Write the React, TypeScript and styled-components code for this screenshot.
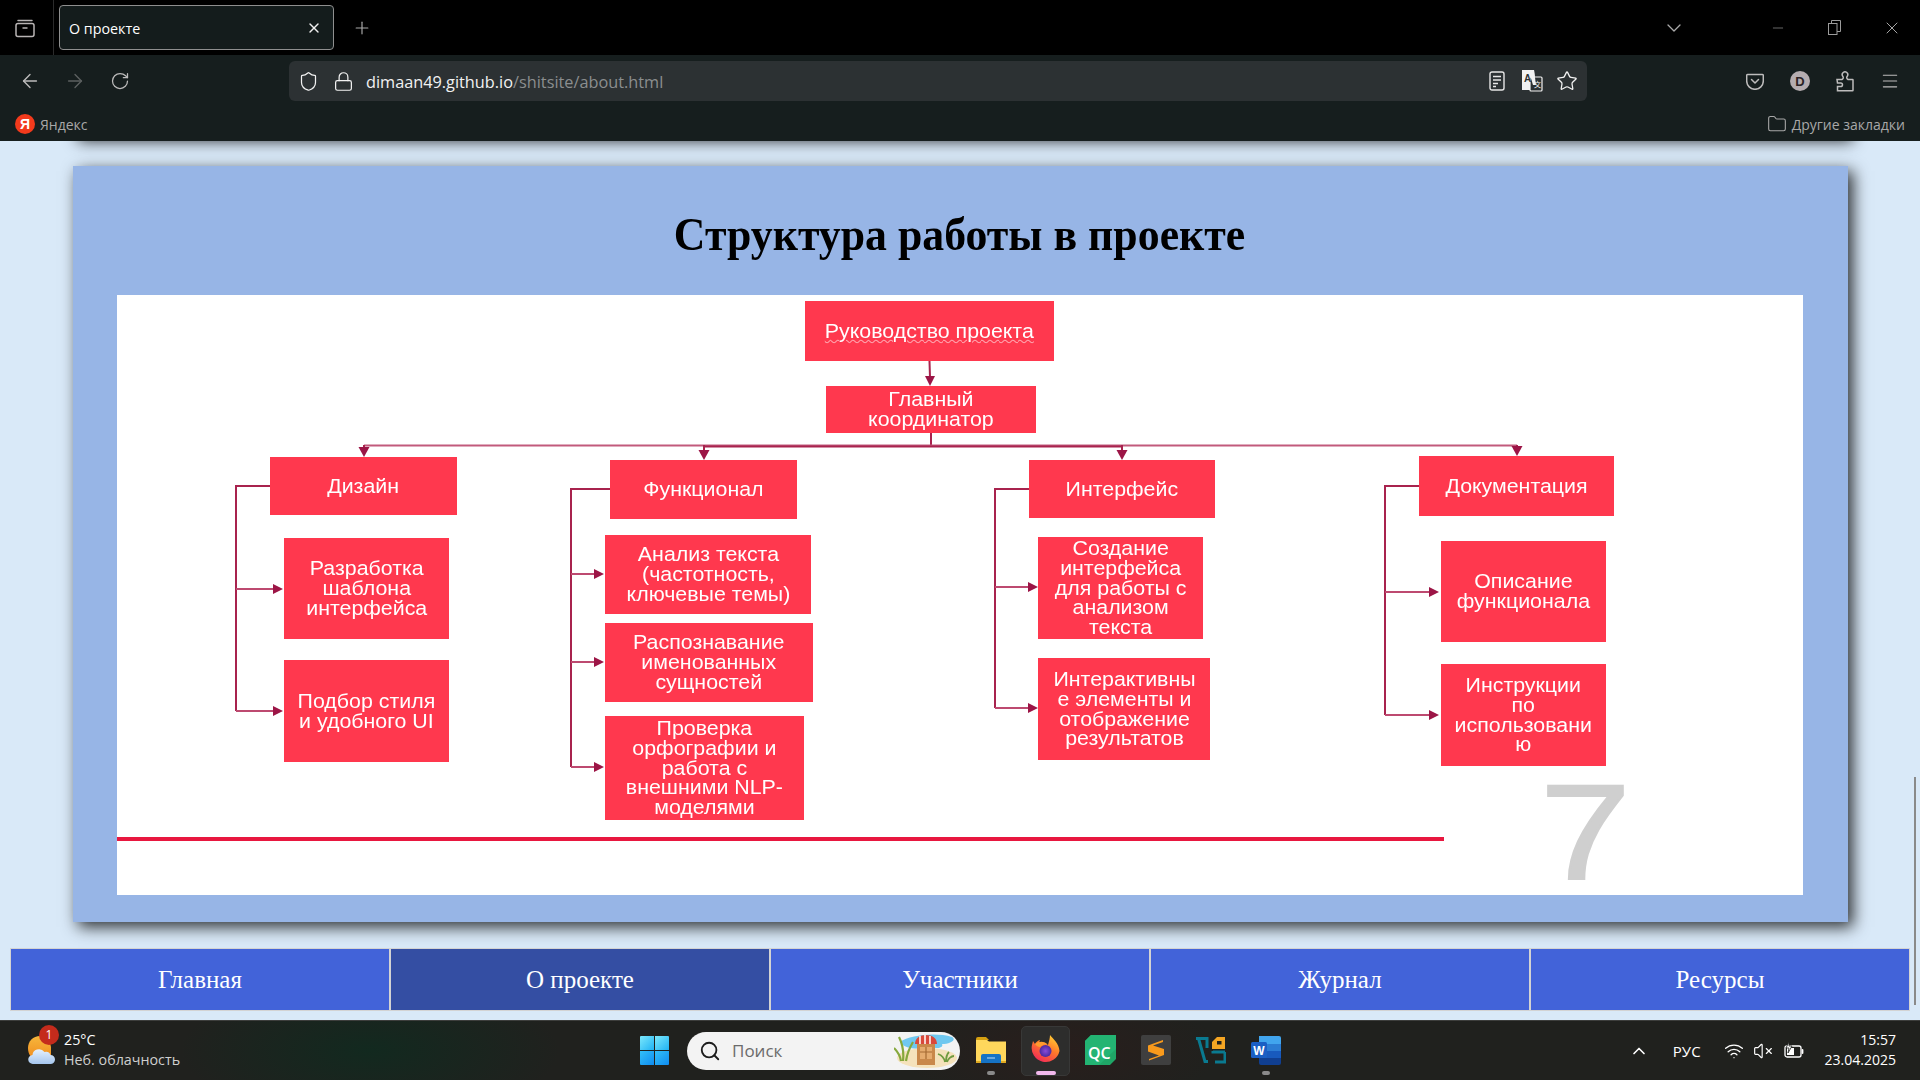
import styled, { createGlobalStyle } from "styled-components";
import {
  ArrowLeft,
  ArrowRight,
  ChevronDown,
  ChevronUp,
  Folder,
  Lock,
  Menu,
  Minus,
  Plus,
  RotateCw,
  Search,
  Shield,
  Star,
  VolumeX,
  Wifi,
  X,
} from "lucide-react";

const GlobalStyle = createGlobalStyle`
  html, body {
    margin: 0;
    padding: 0;
    width: 1920px;
    height: 1080px;
    overflow: hidden;
    background: #d9e9f8;
  }

  * {
    box-sizing: border-box;
  }
`;

const Screen = styled.div`
  width: 1920px;
  height: 1080px;
  display: flex;
  flex-direction: column;
  font-family: "Open Sans", "Liberation Sans", sans-serif;
`;

/* ---------- browser chrome ---------- */

const TabStrip = styled.div`
  height: 55px;
  background: #000;
  display: flex;
  align-items: flex-start;
  color: #c8c6c6;
`;

const TabListSlot = styled.div`
  width: 54px;
  height: 55px;
  border-right: 1px solid #2b2b2b;
  display: flex;
  align-items: center;
  justify-content: center;
  padding-right: 4px;
`;

const Tab = styled.div`
  width: 275px;
  height: 45px;
  margin: 5px 0 0 5px;
  padding: 1px 11px 0 9px;
  display: flex;
  align-items: center;
  justify-content: space-between;
  background: #141c1c;
  border: 1px solid #8f8f8f;
  border-radius: 4px;
  color: #fff;
  font-size: 14.3px;
`;

const NewTab = styled.div`
  width: 56px;
  height: 55px;
  display: flex;
  align-items: center;
  justify-content: center;
`;

const StripRight = styled.div`
  margin-left: auto;
  display: flex;
  align-items: center;
  height: 55px;
`;

const TabsMenu = styled.div`
  width: 60px;
  display: flex;
  justify-content: center;
  margin-right: 45px;
`;

const WindowButton = styled.div`
  width: 57px;
  display: flex;
  justify-content: center;
  align-items: center;
`;

const Toolbar = styled.div`
  height: 52px;
  background: #161e1e;
  display: flex;
  align-items: center;
  padding: 0 8px 0 7px;
`;

const ToolButton = styled.div<{ $dim?: boolean }>`
  width: 45px;
  height: 40px;
  display: flex;
  align-items: center;
  justify-content: center;
  color: ${(p) => (p.$dim ? "#5c6060" : "#bdbcbc")};
`;

const UrlBar = styled.div`
  width: 1298px;
  height: 40px;
  margin-left: 147px;
  padding-left: 1px;
  padding-right: 3px;
  background: #2c3133;
  border-radius: 6px;
  display: flex;
  align-items: center;
  color: #f2f2f2;
`;

const UrlIcon = styled.div<{ $w: number }>`
  width: ${(p) => p.$w}px;
  height: 40px;
  display: flex;
  align-items: center;
  justify-content: center;
  flex: none;
`;

const UrlText = styled.div`
  margin-left: 5px;
  padding-top: 2px;
  font-size: 16.3px;
  flex: 1;
  color: #8b8e8f;
  white-space: nowrap;

  b {
    font-weight: 400;
    color: #f2f2f2;
  }
`;

const ToolRight = styled.div`
  margin-left: auto;
  display: flex;
`;

const Bookmarks = styled.div`
  height: 34px;
  background: #161e1e;
  display: flex;
  align-items: center;
  justify-content: space-between;
  padding: 0 15px;
  font-size: 14px;
  color: #a8a8a8;
`;

const Bookmark = styled.div`
  display: flex;
  align-items: center;
  gap: 5px;
`;

const YandexLogo = styled.span`
  width: 20px;
  height: 20px;
  border-radius: 50%;
  background: #f33a1c;
  color: #fff;
  font-family: "Liberation Sans", sans-serif;
  font-weight: 700;
  font-size: 14px;
  display: flex;
  align-items: center;
  justify-content: center;
`;

/* ---------- page ---------- */

const Page = styled.main`
  position: relative;
  height: 879px;
  overflow: hidden;
  background: #d9e9f8;
  display: flex;
  flex-direction: column;
`;

const PreviousCard = styled.div`
  height: 20px;
  margin: -25px 72px 30px 73px;
  background: #97b5e6;
  box-shadow: 5px 5px 15px rgba(0, 0, 0, 0.8);
  flex: none;
`;

const Card = styled.section`
  margin: 0 72px 0 73px;
  height: 756px;
  padding: 0 45px 27px 44px;
  background: #97b5e6;
  box-shadow: 5px 5px 15px rgba(0, 0, 0, 0.8);
  display: flex;
  flex-direction: column;
  flex: none;
`;

const Title = styled.h2`
  height: 129px;
  margin: 0;
  padding-top: 6px;
  display: flex;
  align-items: center;
  justify-content: center;
  font-family: "Liberation Serif", serif;
  font-size: 47px;
  font-weight: 700;
  color: #000;

  span {
    display: inline-block;
    transform: scaleX(0.932);
  }
`;

const Diagram = styled.div`
  position: relative;
  flex: 1;
  background: #fff;
`;

const Wires = styled.svg`
  position: absolute;
  inset: 0;
  width: 100%;
  height: 100%;
  filter: blur(0.3px);
`;

const Node = styled.div<{ $x: number; $y: number; $w: number; $h: number; $wavy?: boolean }>`
  position: absolute;
  left: ${(p) => p.$x - 117}px;
  top: ${(p) => p.$y - 295}px;
  width: ${(p) => p.$w}px;
  height: ${(p) => p.$h}px;
  padding-top: 1px;
  display: flex;
  align-items: center;
  justify-content: center;
  text-align: center;
  white-space: pre;
  background: #ff384e;
  color: #fff;
  font-family: "Liberation Sans", sans-serif;
  font-size: 19.7px;
  line-height: 19.8px;
  filter: blur(0.35px);

  span {
    display: inline-block;
    transform: scaleX(1.085);
    text-decoration: ${(p) => (p.$wavy ? "underline wavy rgba(255,255,255,0.55) 1px" : "none")};
  }
`;

const RedRule = styled.div`
  position: absolute;
  left: 0;
  top: 542px;
  width: 1327px;
  height: 4px;
  background: #e8173f;
`;

const SlideNumber = styled.div`
  position: absolute;
  left: 1423px;
  top: 483px;
  font-family: "Liberation Sans", sans-serif;
  font-size: 136px;
  line-height: 109px;
  color: #cfcfcf;
  -webkit-text-stroke: 2px #cfcfcf;
  transform: scaleX(1.2);
  transform-origin: left center;
`;

const Nav = styled.nav`
  margin: 26px 10px 0 10px;
  height: 63px;
  display: grid;
  grid-template-columns: repeat(5, 1fr);
  flex: none;
`;

const NavItem = styled.a<{ $active?: boolean }>`
  display: flex;
  align-items: center;
  justify-content: center;
  background: ${(p) => (p.$active ? "#344ea3" : "#4263d9")};
  border: 1px solid #d3d3d3;
  color: #fff;
  font-family: "Liberation Serif", serif;
  font-size: 25px;
`;

const ScrollThumb = styled.div`
  position: absolute;
  right: 4px;
  top: 636px;
  width: 2px;
  height: 228px;
  background: #8a8a8a;
`;

/* ---------- taskbar ---------- */

const Taskbar = styled.footer`
  height: 60px;
  border-top: 1px solid #3d3e3c;
  background:
    radial-gradient(ellipse 190px 70px at 370px 50%, #12291f 0%, transparent 100%),
    radial-gradient(ellipse 160px 60px at 1060px 50%, #291e1c 0%, transparent 100%),
    #20211e;
  display: flex;
  align-items: center;
  color: #fff;
`;

const Weather = styled.div`
  width: 640px;
  padding: 0 0 2px 28px;
  display: flex;
  align-items: center;
  gap: 9px;
`;

const WeatherIcon = styled.div`
  position: relative;
  width: 27px;
  height: 30px;
  flex: none;
`;

const Badge = styled.span`
  position: absolute;
  left: 11px;
  top: -10px;
  width: 20px;
  height: 20px;
  border-radius: 50%;
  background: #c42b1c;
  color: #fff;
  font-size: 12px;
  display: flex;
  align-items: center;
  justify-content: center;
`;

const WeatherText = styled.div`
  font-size: 14.3px;
  line-height: 20px;

  span {
    display: block;
    color: #cfcfcf;
  }
`;

const StartLogo = styled.div`
  width: 29px;
  height: 29px;
  margin-right: 18px;
  flex: none;
`;

const SearchBox = styled.div`
  width: 273px;
  height: 38px;
  margin-right: 3px;
  padding: 0 2px 0 12px;
  border-radius: 19px;
  background: #f3f3f3;
  color: #6b6b6b;
  font-size: 17px;
  display: flex;
  align-items: center;
  gap: 11px;
  flex: none;

  svg:last-child {
    margin-left: auto;
  }
`;

const AppSlot = styled.div<{ $active?: boolean }>`
  position: relative;
  width: 55px;
  height: 50px;
  padding-bottom: 1px;
  display: flex;
  align-items: center;
  justify-content: center;
  flex: none;

  ${(p) =>
    p.$active &&
    `
    &::before {
      content: "";
      position: absolute;
      inset: 0 3px;
      background: #2d2d2c;
      border: 1px solid #383837;
      border-radius: 5px;
    }
  `}

  svg {
    position: relative;
  }
`;

const RunDot = styled.span<{ $active?: boolean }>`
  position: absolute;
  bottom: 1px;
  left: 50%;
  transform: translateX(-50%);
  width: ${(p) => (p.$active ? 20 : 8)}px;
  height: 4px;
  border-radius: 2px;
  background: ${(p) => (p.$active ? "#f2b8ec" : "#8a8a8a")};
`;

const Tray = styled.div`
  margin-left: auto;
  padding-right: 24px;
  display: flex;
  align-items: center;
  font-size: 15px;
`;

const TrayItem = styled.div<{ $gap: number }>`
  margin-left: ${(p) => p.$gap}px;
  display: flex;
  align-items: center;
  justify-content: center;
`;

const Clock = styled.div`
  margin-left: 21px;
  padding-bottom: 2px;
  text-align: right;
  line-height: 20px;
  font-size: 14px;
`;

/* ---------- data ---------- */

type Box = { x: number; y: number; r: number; b: number; text: string; wavy?: boolean };

const boxes: Box[] = [
  { x: 805, y: 301, r: 1054, b: 361, text: "Руководство проекта", wavy: true },
  { x: 826, y: 386, r: 1036, b: 433, text: "Главный\nкоординатор" },
  { x: 270, y: 457, r: 457, b: 515, text: "Дизайн" },
  { x: 610, y: 460, r: 797, b: 519, text: "Функционал" },
  { x: 1029, y: 460, r: 1215, b: 518, text: "Интерфейс" },
  { x: 1419, y: 456, r: 1614, b: 516, text: "Документация" },
  { x: 284, y: 538, r: 449, b: 639, text: "Разработка\nшаблона\nинтерфейса" },
  { x: 284, y: 660, r: 449, b: 762, text: "Подбор стиля\nи удобного UI" },
  { x: 605, y: 535, r: 811, b: 614, text: "Анализ текста\n(частотность,\nключевые темы)" },
  { x: 605, y: 623, r: 813, b: 702, text: "Распознавание\nименованных\nсущностей" },
  { x: 605, y: 716, r: 804, b: 820, text: "Проверка\nорфографии и\nработа с\nвнешними NLP-\nмоделями" },
  { x: 1038, y: 537, r: 1203, b: 639, text: "Создание\nинтерфейса\nдля работы с\nанализом\nтекста" },
  { x: 1038, y: 658, r: 1210, b: 760, text: "Интерактивны\nе элементы и\nотображение\nрезультатов" },
  { x: 1441, y: 541, r: 1606, b: 642, text: "Описание\nфункционала" },
  { x: 1441, y: 664, r: 1606, b: 766, text: "Инструкции\nпо\nиспользовани\nю" },
];

const drops = [
  { x: 364, to: 457 },
  { x: 704, to: 460 },
  { x: 1122, to: 460 },
  { x: 1517, to: 456 },
];

const brackets = [
  { x: 236, from: 270, top: 486, arrows: [589, 711], to: 283 },
  { x: 571, from: 610, top: 489, arrows: [574, 662, 767], to: 604 },
  { x: 995, from: 1029, top: 489, arrows: [587, 708], to: 1038 },
  { x: 1385, from: 1419, top: 486, arrows: [592, 715], to: 1439 },
];

const navItems = ["Главная", "О проекте", "Участники", "Журнал", "Ресурсы"];

const WIRE = "#a8234e";

/* ---------- drawings ---------- */

function DiagramWires() {
  return (
    <Wires viewBox="117 295 1686 600">
      <g stroke={WIRE} strokeWidth="2" fill="none">
        <path d="M929.5 361 L930 378" />
        <path d="M931 433 V446" />
        <path d="M364 445.5 H1517" stroke="#c25a7c" />
        <path d="M704 446.5 H1122" />
        {drops.map((d) => (
          <path key={d.x} d={`M${d.x} 445 V${d.to - 8}`} />
        ))}
        {brackets.map((b) => (
          <g key={b.x}>
            <path d={`M${b.from} ${b.top} H${b.x} V${b.arrows[b.arrows.length - 1]}`} />
            {b.arrows.map((y) => (
              <path key={y} d={`M${b.x} ${y} H${b.to - 8}`} stroke="#bd4a70" />
            ))}
          </g>
        ))}
      </g>
      <g fill="#9c1546">
        <path d="M925 376 h10 l-5 10 z" />
        {drops.map((d) => (
          <path key={d.x} d={`M${d.x - 5.5} ${d.to - 10} h11 l-5.5 10 z`} />
        ))}
        {brackets.map((b) =>
          b.arrows.map((y) => <path key={y} d={`M${b.to - 10} ${y - 5} l10 5 l-10 5 z`} />)
        )}
      </g>
    </Wires>
  );
}

function TabListIcon() {
  return (
    <svg width="20" height="20" viewBox="0 0 20 20" fill="none" stroke="#b8b4b4" strokeWidth="1.5">
      <path d="M3 2.5h14" strokeLinecap="round" />
      <rect x="1" y="5.5" width="18" height="13" rx="2" />
      <path d="M7.5 10h5" />
    </svg>
  );
}

function RestoreIcon() {
  return (
    <svg width="13" height="15" viewBox="0 0 13 15" fill="none" stroke="#9c9c9c" strokeWidth="1">
      <rect x="0.5" y="3.5" width="8.5" height="11" />
      <path d="M3.5 3.5V0.5H12.5V11.5H9" />
    </svg>
  );
}

function ReaderIcon() {
  return (
    <svg width="16" height="20" viewBox="0 0 16 20" fill="none" stroke="#e6e6e6" strokeWidth="1.4">
      <rect x="1" y="1" width="14" height="18" rx="2" />
      <path d="M4 5.5h8M4 9h8M4 12.5h5M4 15.5h3" />
    </svg>
  );
}

function TranslateIcon() {
  return (
    <svg width="22" height="22" viewBox="0 0 22 22">
      <path d="M1 0h12l2 20H1z" fill="#f2f2f2" />
      <rect x="9" y="7" width="12" height="14" rx="1" fill="#2c3133" stroke="#f2f2f2" strokeWidth="1.2" />
      <path d="M7.5 0h5.5l2 15-3 0z" fill="#f2f2f2" />
      <text x="3" y="11.5" fontSize="10" fontWeight="700" fontFamily="Liberation Sans" fill="#2c3133">
        A
      </text>
      <text x="13" y="17" fontSize="7" fontFamily="Noto Sans CJK SC" fill="#f2f2f2">
        文
      </text>
    </svg>
  );
}

function PocketIcon() {
  return (
    <svg width="18" height="18" viewBox="0 0 18 18" fill="none" stroke="#bdbcbc" strokeWidth="1.5">
      <path d="M1.5 2.5h15a.8.8 0 0 1 .8.8V9a8.3 8.3 0 0 1-16.6 0V3.3a.8.8 0 0 1 .8-.8z" />
      <path d="M5.5 7.5 9 11l3.5-3.5" strokeLinecap="round" strokeLinejoin="round" />
    </svg>
  );
}

function AccountIcon() {
  return (
    <svg width="20" height="20" viewBox="0 0 20 20">
      <circle cx="10" cy="10" r="10" fill="#b5adb0" />
      <text x="10" y="14.5" textAnchor="middle" fontSize="13" fontWeight="700" fontFamily="Liberation Sans" fill="#2b2325">
        D
      </text>
    </svg>
  );
}

function PuzzleIcon() {
  return (
    <svg width="18" height="22" viewBox="0 0 18 22" fill="none" stroke="#bdbcbc" strokeWidth="1.5">
      <path d="M1 9.5h5a2 2 0 0 0 .6-3.4 2.8 2.8 0 1 1 4.8 0A2 2 0 0 0 12 9.5h4.5a.5.5 0 0 1 .5.5v10.2a.5.5 0 0 1-.5.5H1.5v-4.2h3.2a1.8 1.8 0 0 0 0-3.6H1.5z" />
    </svg>
  );
}

function WindowsLogo() {
  return (
    <StartLogo>
      <svg width="29" height="29" viewBox="0 0 29 29">
        <defs>
          <linearGradient id="winA" x1="0" y1="0" x2="1" y2="1">
            <stop offset="0" stopColor="#7ce8fb" />
            <stop offset="1" stopColor="#1fb2f4" />
          </linearGradient>
          <linearGradient id="winB" x1="0" y1="0" x2="1" y2="1">
            <stop offset="0" stopColor="#33c0f8" />
            <stop offset="1" stopColor="#0f8cf0" />
          </linearGradient>
        </defs>
        <path d="M1 0h13v14H0V1a1 1 0 0 1 1-1z" fill="url(#winA)" />
        <path d="M15 0h13a1 1 0 0 1 1 1v13H15z" fill="url(#winA)" />
        <path d="M0 15h14v14H1a1 1 0 0 1-1-1z" fill="url(#winB)" />
        <path d="M15 15h14v13a1 1 0 0 1-1 1H15z" fill="url(#winB)" />
      </svg>
    </StartLogo>
  );
}

function BeachPicture() {
  return (
    <svg width="64" height="36" viewBox="0 0 64 36">
      <ellipse cx="33" cy="25" rx="30" ry="10" fill="#f5e2bb" />
      <path d="M6 9C16 2 42-1 58 4c5 3-2 7-10 7 2 4-6 5-12 3C24 17 10 16 6 9z" fill="#6fc8f0" />
      <path d="M9 28C10 19 9 12 5 4M12 28c1-7 4-14 7-19M7 28C6 22 3 18 0 15" stroke="#86a83c" strokeWidth="2.2" fill="none" />
      <rect x="23" y="10" width="18" height="22" fill="#c9884a" />
      <path d="M21 11c0-6 5-9 11-9s11 3 11 9z" fill="#d9483b" />
      <path d="M26 3v8M31 2v9M36 3v8" stroke="#fff" strokeWidth="1.500" />
      <path d="M26 14h12v12H26z" fill="#e5ab6e" />
      <path d="M26 19h12M32 14v12" stroke="#a66b33" strokeWidth="1.200" />
      <path d="M51 29c-1-5-4-7-7-8M52 29c0-5 1-8 3-10M53 29c1-3 4-6 7-6" stroke="#6f9a3f" strokeWidth="1.800" fill="none" />
    </svg>
  );
}

function ExplorerIcon() {
  return (
    <svg width="30" height="26" viewBox="0 0 30 26">
      <path d="M0 2a2 2 0 0 1 2-2h8l3 3h-13z" fill="#d6a011" />
      <path d="M0 3h11l2 1.500h17V25a1 1 0 0 1-1 1H1a1 1 0 0 1-1-1z" fill="#ffd75c" />
      <path d="M0 24h30v2H0z" fill="#e0a920" />
      <path d="M5 19a2 2 0 0 1 2-2h16a2 2 0 0 1 2 2v7H5z" fill="#1673c5" />
      <path d="M11 21h8" stroke="#bfe0f8" strokeWidth="1" />
    </svg>
  );
}

function FirefoxIcon() {
  return (
    <svg width="29" height="30" viewBox="0 0 29 30">
      <defs>
        <linearGradient id="foxA" x1="0.8" y1="0" x2="0.2" y2="1">
          <stop offset="0" stopColor="#ffd234" />
          <stop offset="0.45" stopColor="#ff7a2a" />
          <stop offset="1" stopColor="#f1235c" />
        </linearGradient>
        <radialGradient id="foxB">
          <stop offset="0" stopColor="#8a4bd8" />
          <stop offset="1" stopColor="#4a2aa0" />
        </radialGradient>
      </defs>
      <path d="M19 0c3 4 9 8 9.500 16A14 14 0 1 1 1 10l1-4 2 3c1-2 3-3.500 5-4l-1 3c4-1 7 0 9 2 1-4 2-7 2-10z" fill="url(#foxA)" />
      <circle cx="14.500" cy="16" r="6" fill="url(#foxB)" />
      <path d="M4 9c4-3 9-3 12 0 -3 0-5 1-7 3-2 0-3.500-1-5-3z" fill="#ff9b2e" />
    </svg>
  );
}

function QtIcon() {
  return (
    <svg width="31" height="30" viewBox="0 0 31 30">
      <path d="M6 0h25v24l-6 6H0V6z" fill="#1fa667" />
      <path d="M0 6 6 0h25v14L14 30H0z" fill="#23b473" />
      <text x="3" y="24" fontSize="16" fontWeight="600" fontFamily="Open Sans" fill="#fff">
        QC
      </text>
    </svg>
  );
}

function SublimeIcon() {
  return (
    <svg width="30" height="30" viewBox="0 0 30 30">
      <rect width="30" height="30" rx="2" fill="#3f3f3f" />
      <path d="M22 5 7 10.500v6l11 4-10 3.500v1.500l15-5.500v-6l-11-3.500 10-3.500z" fill="#f89a1c" />
    </svg>
  );
}

function VsIcon() {
  return (
    <svg width="30" height="28" viewBox="0 0 30 28">
      <path d="M0 2.500H11V12M2.500 2.500 9 25.500h3" fill="none" stroke="#0a7a90" strokeWidth="3" />
      <path d="M29 16H17v-1M29 16v10H19" fill="none" stroke="#0a7a90" strokeWidth="3" />
      <path d="M16 13V6l5-5h8v12z" fill="#f5a623" />
      <rect x="21" y="5" width="4.500" height="3.500" fill="#20211e" />
    </svg>
  );
}

function WordIcon() {
  return (
    <svg width="30" height="30" viewBox="0 0 30 30">
      <path d="M8 1h20a2 2 0 0 1 2 2v6H8z" fill="#41a5ee" />
      <path d="M8 9h22v7H8z" fill="#2b7cd3" />
      <path d="M8 16h22v7H8z" fill="#185abd" />
      <path d="M8 23h22v5a2 2 0 0 1-2 2H10a2 2 0 0 1-2-2z" fill="#103f91" />
      <rect y="7" width="16" height="16" rx="1.500" fill="#1a5fc4" />
      <text x="8" y="20" textAnchor="middle" fontSize="12" fontWeight="700" fontFamily="Liberation Sans" fill="#fff">
        W
      </text>
    </svg>
  );
}

function WeatherPicture() {
  return (
    <svg width="27" height="30" viewBox="0 0 27 30">
      <defs>
        <linearGradient id="sun" x1="0" y1="0" x2="0" y2="1">
          <stop offset="0" stopColor="#f6b73c" />
          <stop offset="1" stopColor="#f08a1d" />
        </linearGradient>
        <linearGradient id="cloud" x1="0" y1="0" x2="0" y2="1">
          <stop offset="0" stopColor="#e6f1fc" />
          <stop offset="1" stopColor="#a5c6ee" />
        </linearGradient>
      </defs>
      <path d="M12 1C5 1 0 6 0 13c0 6 3 10 7 12h16V12C22 6 18 1 12 1z" fill="url(#sun)" />
      <path d="M5 29a4.500 4.500 0 0 1-.5-9 6 6 0 0 1 4.500-5.500 7 7 0 0 1 7.500 2.500 5 5 0 0 1 6 3 4.500 4.500 0 0 1 0 9z" fill="url(#cloud)" />
    </svg>
  );
}

function BatteryIcon() {
  return (
    <svg width="20" height="18" viewBox="0 0 20 18" fill="none" stroke="#fff" strokeWidth="1.3">
      <rect x="1" y="4" width="16" height="11" rx="2" />
      <path d="M18.500 8v3" strokeWidth="1.800" strokeLinecap="round" />
      <path d="M3 6h7v7H3z" fill="#fff" stroke="none" />
      <path d="M5 0 2 6h3l-1 5 4-7H5z" fill="#fff" stroke="#20211e" strokeWidth="0.8" />
    </svg>
  );
}

export default function App() {
  return (
    <Screen>
      <GlobalStyle />
      <TabStrip>
        <TabListSlot>
          <TabListIcon />
        </TabListSlot>
        <Tab>
          О проекте
          <X size={16} color="#f0f0f0" strokeWidth={2} />
        </Tab>
        <NewTab>
          <Plus size={20} strokeWidth={1.4} color="#aaa" />
        </NewTab>
        <StripRight>
          <TabsMenu>
            <ChevronDown size={24} strokeWidth={1.3} color="#aaa" />
          </TabsMenu>
          <WindowButton>
            <Minus size={16} strokeWidth={1} color="#9c9c9c" />
          </WindowButton>
          <WindowButton>
            <RestoreIcon />
          </WindowButton>
          <WindowButton>
            <X size={20} strokeWidth={1} color="#c8c8c8" />
          </WindowButton>
        </StripRight>
      </TabStrip>

      <Toolbar>
        <ToolButton>
          <ArrowLeft size={22} strokeWidth={1.5} />
        </ToolButton>
        <ToolButton $dim>
          <ArrowRight size={22} strokeWidth={1.5} />
        </ToolButton>
        <ToolButton>
          <RotateCw size={20} strokeWidth={1.5} />
        </ToolButton>
        <UrlBar>
          <UrlIcon $w={36}>
            <Shield size={21} strokeWidth={1.4} />
          </UrlIcon>
          <UrlIcon $w={35}>
            <Lock size={21} strokeWidth={1.4} />
          </UrlIcon>
          <UrlText>
            <b>dimaan49.github.io</b>/shitsite/about.html
          </UrlText>
          <UrlIcon $w={35}>
            <ReaderIcon />
          </UrlIcon>
          <UrlIcon $w={35}>
            <TranslateIcon />
          </UrlIcon>
          <UrlIcon $w={35}>
            <Star size={22} strokeWidth={1.4} />
          </UrlIcon>
        </UrlBar>
        <ToolRight>
          <ToolButton>
            <PocketIcon />
          </ToolButton>
          <ToolButton>
            <AccountIcon />
          </ToolButton>
          <ToolButton>
            <PuzzleIcon />
          </ToolButton>
          <ToolButton>
            <Menu size={20} strokeWidth={1.3} />
          </ToolButton>
        </ToolRight>
      </Toolbar>

      <Bookmarks>
        <Bookmark>
          <YandexLogo>Я</YandexLogo>
          Яндекс
        </Bookmark>
        <Bookmark>
          <Folder size={20} strokeWidth={1.3} />
          Другие закладки
        </Bookmark>
      </Bookmarks>

      <Page>
        <PreviousCard />
        <Card>
          <Title>
            <span>Структура работы в проекте</span>
          </Title>
          <Diagram>
            <DiagramWires />
            {boxes.map((b) => (
              <Node key={b.text} $x={b.x} $y={b.y} $w={b.r - b.x} $h={b.b - b.y} $wavy={b.wavy}>
                <span>{b.text}</span>
              </Node>
            ))}
            <RedRule />
            <SlideNumber>7</SlideNumber>
          </Diagram>
        </Card>
        <Nav>
          {navItems.map((item) => (
            <NavItem key={item} $active={item === "О проекте"}>
              {item}
            </NavItem>
          ))}
        </Nav>
        <ScrollThumb />
      </Page>

      <Taskbar>
        <Weather>
          <WeatherIcon>
            <WeatherPicture />
            <Badge>1</Badge>
          </WeatherIcon>
          <WeatherText>
            25°C
            <span>Неб. облачность</span>
          </WeatherText>
        </Weather>
        <WindowsLogo />
        <SearchBox>
          <Search size={22} color="#1c1c1c" strokeWidth={2} />
          Поиск
          <BeachPicture />
        </SearchBox>
        <AppSlot>
          <ExplorerIcon />
          <RunDot />
        </AppSlot>
        <AppSlot $active>
          <FirefoxIcon />
          <RunDot $active />
        </AppSlot>
        <AppSlot>
          <QtIcon />
        </AppSlot>
        <AppSlot>
          <SublimeIcon />
        </AppSlot>
        <AppSlot>
          <VsIcon />
        </AppSlot>
        <AppSlot>
          <WordIcon />
          <RunDot />
        </AppSlot>
        <Tray>
          <TrayItem $gap={0}>
            <ChevronUp size={20} strokeWidth={2} />
          </TrayItem>
          <TrayItem $gap={24}>РУС</TrayItem>
          <TrayItem $gap={23}>
            <Wifi size={20} strokeWidth={1.6} />
          </TrayItem>
          <TrayItem $gap={9}>
            <VolumeX size={20} strokeWidth={1.4} />
          </TrayItem>
          <TrayItem $gap={11}>
            <BatteryIcon />
          </TrayItem>
          <Clock>
            15:57
            <br />
            23.04.2025
          </Clock>
        </Tray>
      </Taskbar>
    </Screen>
  );
}
